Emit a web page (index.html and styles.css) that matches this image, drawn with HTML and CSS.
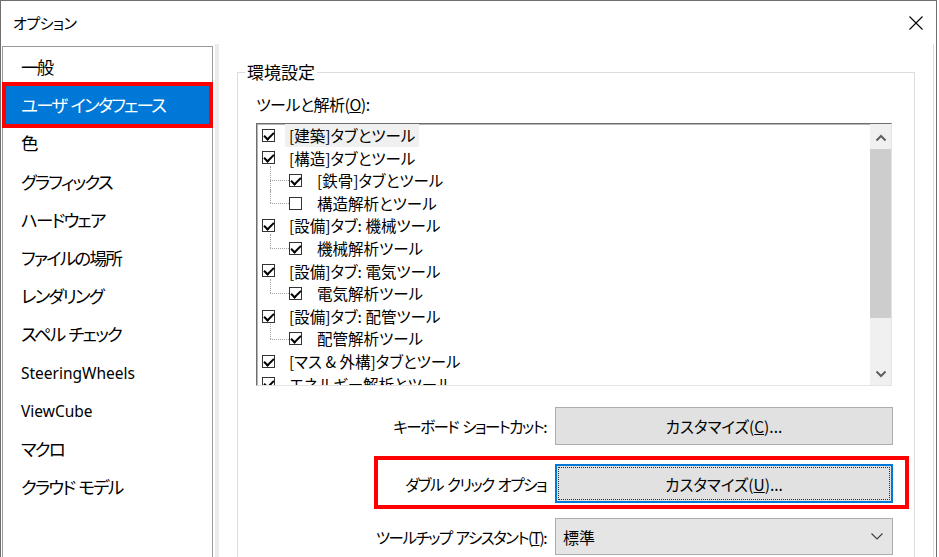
FILE: index.html
```html
<!DOCTYPE html>
<html lang="ja">
<head>
<meta charset="utf-8">
<title>オプション</title>
<link rel="stylesheet" href="styles.css">
</head>
<body>
<div class="window">
  <div class="titlebar">
    <span class="title">オプション</span>
    <svg class="close" width="14" height="14" viewBox="0 0 14 14"><path d="M0.5 0.5 L13.5 13.5 M13.5 0.5 L0.5 13.5" stroke="#000" stroke-width="1.1" fill="none"/></svg>
  </div>
  <div class="body">
    <ul class="nav">
      <li>一般</li>
      <li class="sel">ユーザ インタフェース</li>
      <li>色</li>
      <li>グラフィックス</li>
      <li>ハードウェア</li>
      <li>ファイルの場所</li>
      <li>レンダリング</li>
      <li>スペル チェック</li>
      <li class="latin">SteeringWheels</li>
      <li class="latin">ViewCube</li>
      <li>マクロ</li>
      <li>クラウド モデル</li>
    </ul>
    <div class="splitter"></div>
    <div class="content">
      <fieldset class="group">
        <legend>環境設定</legend>
        <div class="inner">
          <div class="field-label">ツールと解析(<u>O</u>):</div>
          <div class="tree">
            <div class="tree-list">
              <div class="node"><span class="cb on"></span><span class="lbl hl">[建築]タブとツール</span></div>
              <div class="node"><span class="cb on"></span><span class="lbl">[構造]タブとツール</span></div>
              <div class="node child mid"><span class="conn"></span><span class="cb on"></span><span class="lbl">[鉄骨]タブとツール</span></div>
              <div class="node child"><span class="conn"></span><span class="cb"></span><span class="lbl">構造解析とツール</span></div>
              <div class="node"><span class="cb on"></span><span class="lbl">[設備]タブ: 機械ツール</span></div>
              <div class="node child"><span class="conn"></span><span class="cb on"></span><span class="lbl">機械解析ツール</span></div>
              <div class="node"><span class="cb on"></span><span class="lbl">[設備]タブ: 電気ツール</span></div>
              <div class="node child"><span class="conn"></span><span class="cb on"></span><span class="lbl">電気解析ツール</span></div>
              <div class="node"><span class="cb on"></span><span class="lbl">[設備]タブ: 配管ツール</span></div>
              <div class="node child"><span class="conn"></span><span class="cb on"></span><span class="lbl">配管解析ツール</span></div>
              <div class="node"><span class="cb on"></span><span class="lbl">[マス &amp; 外構]タブとツール</span></div>
              <div class="node"><span class="cb on"></span><span class="lbl">エネルギー解析とツール</span></div>
            </div>
            <div class="vscroll">
              <div class="sb-btn up"><svg width="12" height="8" viewBox="0 0 12 8"><path d="M1.5 6.5 L6 2 L10.5 6.5" stroke="#606060" stroke-width="2" fill="none"/></svg></div>
              <div class="sb-thumb"></div>
              <div class="sb-track"></div>
              <div class="sb-btn down"><svg width="12" height="8" viewBox="0 0 12 8"><path d="M1.5 1.5 L6 6 L10.5 1.5" stroke="#606060" stroke-width="2" fill="none"/></svg></div>
            </div>
          </div>
          <div class="row r1">
            <span class="lab">キーボード ショートカット:</span>
            <div class="btn">カスタマイズ(<u>C</u>)...</div>
          </div>
          <div class="row r2 annotated">
            <span class="lab">ダブル クリック オプショ</span>
            <div class="btn focus"><span class="focus-ring">カスタマイズ(<u>U</u>)...</span></div>
          </div>
          <div class="row r3">
            <span class="lab">ツールチップ アシスタント(<u>T</u>):</span>
            <div class="combo">
              <span class="combo-text">標準</span>
              <svg width="12" height="7" viewBox="0 0 12 7"><path d="M0.5 0.5 L6 6 L11.5 0.5" stroke="#404040" stroke-width="1.2" fill="none"/></svg>
            </div>
          </div>
        </div>
      </fieldset>
    </div>
  </div>
</div>
</body>
</html>
```

FILE: styles.css
```css
* { box-sizing: border-box; }

html, body {
  margin: 0;
  padding: 0;
  background: #fff;
}

body {
  font-family: "Noto Sans CJK JP", "Noto Sans", sans-serif;
  font-feature-settings: "palt";
  color: #000;
}

.window {
  width: 937px;
  height: 557px;
  border: 1px solid #6f6f6f;
  border-bottom: none;
  background: #fff;
  overflow: hidden;
  display: flex;
  flex-direction: column;
}

.titlebar {
  height: 43px;
  flex: none;
  display: flex;
  align-items: center;
  justify-content: space-between;
  padding: 0 13px 0 12px;
}

.title {
  font-size: 15px;
  line-height: 20px;
  letter-spacing: -0.5px;
}

.close {
  display: block;
  margin-top: 1px;
}

.body {
  flex: 1;
  display: flex;
  padding-left: 1px;
  padding-top: 2px;
  min-height: 0;
}

.nav {
  list-style: none;
  margin: 0;
  padding: 1px 0 0 0;
  width: 211px;
  height: 540px;
  flex: none;
  border: 1px solid #9a9a9a;
  border-bottom: none;
}

.nav li {
  height: 38.2px;
  display: flex;
  align-items: center;
  padding-left: 18px;
  font-size: 17.5px;
  letter-spacing: -1.8px;
  word-spacing: 2px;
  line-height: 22px;
  white-space: nowrap;
}

.nav li.latin {
  font-family: "Noto Sans", sans-serif;
  font-size: 15.5px;
  letter-spacing: 0;
  word-spacing: 0;
}

.nav li.sel {
  background: #0078d7;
  color: #fff;
  position: relative;
}

.nav li.sel::after {
  content: "";
  position: absolute;
  left: -1px;
  right: -1px;
  top: -4px;
  bottom: -4px;
  border: 4px solid #ff0000;
}

.splitter {
  width: 4px;
  margin-left: 2px;
  flex: none;
  background: #ececec;
  margin-top: -2px;
}

.content {
  flex: 1;
  margin-right: 2px;
  border-right: 1px solid #dcdcdc;
  margin-top: -2px;
  min-width: 0;
}

.group {
  margin: 18px 18px 0 18px;
  padding: 0 0 40px 7px;
  border: 1px solid #dcdcdc;
  min-width: 0;
}

.group legend {
  font-size: 17px;
  line-height: 20px;
  padding: 0 2px;
}

.inner {
  margin-left: 11px;
}

.field-label {
  margin-top: 12px;
  font-size: 16px;
  line-height: 20px;
  letter-spacing: -0.5px;
}

.tree {
  margin-top: 9px;
  width: 636px;
  height: 263px;
  display: flex;
  border-top: 1px solid #6e6e6e;
  border-left: 1px solid #6e6e6e;
  border-right: 1px solid #e3e3e3;
  border-bottom: 1px solid #e3e3e3;
  box-shadow: inset 1px 1px 0 #b4b4b4;
  background: #fff;
}

.tree-list {
  flex: 1;
  overflow: hidden;
  padding-left: 5px;
}

.node {
  height: 22.6px;
  display: flex;
  align-items: center;
  font-size: 15.5px;
  white-space: nowrap;
}

.node.child {
  padding-left: 8px;
}

.conn {
  width: 19px;
  align-self: stretch;
  flex: none;
  position: relative;
}

.conn::before {
  content: "";
  position: absolute;
  left: 0;
  top: -3px;
  height: calc(50% + 3px);
  border-left: 1px dotted #a0a0a0;
}

.node.mid .conn::before {
  height: calc(100% + 3px);
}

.conn::after {
  content: "";
  position: absolute;
  left: 0;
  right: 0;
  top: 50%;
  border-top: 1px dotted #a0a0a0;
}

.cb {
  width: 13px;
  height: 13px;
  flex: none;
  border: 1px solid #333;
  background: #fff;
  position: relative;
}

.cb.on::after {
  content: "";
  position: absolute;
  left: 3px;
  top: 0px;
  width: 4px;
  height: 8px;
  border-right: 2px solid #000;
  border-bottom: 2px solid #000;
  transform: rotate(45deg);
}

.lbl {
  margin-left: 10px;
  padding: 0 4px;
  line-height: 22.6px;
}

.node.child .lbl {
  margin-left: 11px;
}

.lbl.hl {
  background: #f0f0f0;
}

.vscroll {
  width: 21px;
  flex: none;
  background: #f0f0f0;
  display: flex;
  flex-direction: column;
}

.sb-btn {
  display: flex;
  align-items: center;
  justify-content: center;
  flex: none;
}

.sb-btn.up { height: 25px; padding-top: 2px; }
.sb-btn.down { height: 22px; }

.sb-thumb {
  height: 169px;
  background: #cdcdcd;
  flex: none;
}

.sb-track { flex: 1; }

.row {
  display: flex;
  width: 637px;
  align-items: stretch;
}

.row.r1 { margin-top: 21px; height: 38px; }
.row.r2 { margin-top: 19px; height: 39px; }
.row.r3 { margin-top: 15px; height: 37px; }

.lab {
  flex: 1;
  text-align: right;
  padding-right: 9px;
  font-size: 15.5px;
  letter-spacing: -1.5px;
  word-spacing: 2px;
  display: flex;
  align-items: center;
  justify-content: flex-end;
  white-space: nowrap;
}

.btn {
  width: 338px;
  flex: none;
  background: #e1e1e1;
  border: 1px solid #adadad;
  display: flex;
  align-items: center;
  justify-content: center;
  font-size: 15.5px;
}

.btn.focus {
  border: 2px solid #0078d7;
  padding: 1px;
}

.focus-ring {
  flex: 1;
  align-self: stretch;
  display: flex;
  align-items: center;
  justify-content: center;
  border: 1px dotted #333;
}

.annotated {
  position: relative;
}

.annotated::after {
  content: "";
  position: absolute;
  left: 118px;
  right: -16px;
  top: -8px;
  bottom: -6px;
  border: 4px solid #ff0000;
}

.combo {
  width: 338px;
  flex: none;
  background: #e5e5e5;
  border: 1px solid #acacac;
  display: flex;
  align-items: center;
  justify-content: space-between;
  padding: 0 9px 0 7px;
  font-size: 16px;
}
```
